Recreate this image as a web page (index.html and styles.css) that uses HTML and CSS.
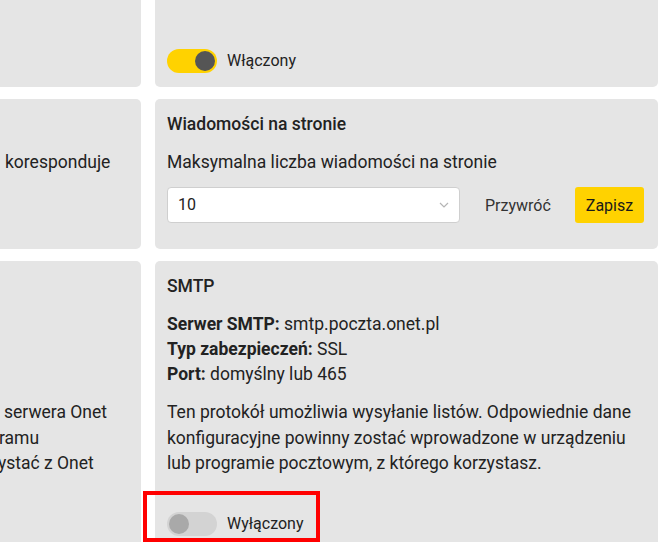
FILE: index.html
```html
<!DOCTYPE html>
<html lang="pl">
<head>
<meta charset="utf-8">
<title>Ustawienia poczty</title>
<link rel="stylesheet" href="styles.css">
</head>
<body>
<div class="settings">
  <!-- row 1 -->
  <div class="card card-left card-top"></div>
  <div class="card card-right card-top">
    <div class="toggle-row">
      <span class="toggle on"><span class="knob"></span></span>
      <span class="toggle-label">Włączony</span>
    </div>
  </div>

  <!-- row 2 -->
  <div class="card card-left">
    <div class="card-title">&nbsp;</div>
    <p class="text frag-a">koresponduje</p>
  </div>
  <div class="card card-right">
    <div class="card-title">Wiadomości na stronie</div>
    <p class="text">Maksymalna liczba wiadomości na stronie</p>
    <div class="form-row">
      <div class="select">
        <span class="select-value">10</span>
        <svg class="chevron" width="10" height="6" viewBox="0 0 10 6"><polyline points="1,1 5,5 9,1" fill="none" stroke="#b5b5b5" stroke-width="1.2"/></svg>
      </div>
      <button class="btn btn-link">Przywróć</button>
      <button class="btn btn-primary">Zapisz</button>
    </div>
  </div>

  <!-- row 3 -->
  <div class="card card-left card-last">
    <div class="card-title">&nbsp;</div>
    <div class="info"><div>&nbsp;</div><div>&nbsp;</div><div>&nbsp;</div></div>
    <div class="desc">
      <div class="frag-b">serwera Onet</div>
      <div class="frag-c">ramu</div>
      <div class="frag-d">ystać z Onet</div>
    </div>
  </div>
  <div class="card card-right card-last">
    <div class="card-title">SMTP</div>
    <div class="info">
      <div><b>Serwer SMTP:</b> smtp.poczta.onet.pl</div>
      <div><b>Typ zabezpieczeń:</b> SSL</div>
      <div><b>Port:</b> domyślny lub 465</div>
    </div>
    <div class="desc">Ten protokół umożliwia wysyłanie listów. Odpowiednie dane konfiguracyjne powinny zostać wprowadzone w urządzeniu lub programie pocztowym, z którego korzystasz.</div>
    <div class="toggle-row toggle-bottom">
      <span class="toggle off"><span class="knob"></span></span>
      <span class="toggle-label">Wyłączony</span>
      <span class="highlight"></span>
    </div>
  </div>
</div>
</body>
</html>
```
FILE: styles.css
```css
html, body {
  margin: 0;
  padding: 0;
  background: #ffffff;
  overflow: hidden;
  height: 542px;
}

body {
  font-family: Roboto, "Noto Sans", sans-serif;
  font-size: 16px;
  color: #222222;
}

.settings {
  display: grid;
  grid-template-columns: 141px 503px;
  column-gap: 14px;
  row-gap: 12px;
  padding-right: 8px;
}

.card {
  background: #e5e5e5;
  padding: 13px 12px;
  border-radius: 5px;
  font-size: 17.5px;
}

.card-left {
  padding-left: 0;
  padding-right: 0;
  border-radius: 0 5px 5px 0;
  white-space: nowrap;
  overflow: hidden;
}

.card-top {
  padding-top: 49px;
  padding-bottom: 14px;
  border-top-left-radius: 0;
  border-top-right-radius: 0;
}

.card-last {
  padding-bottom: 60px;
}

.card-title {
  line-height: 24px;
  font-weight: 500;
  margin-bottom: 14px;
}

.text {
  margin: 0 0 13px 0;
  line-height: 24px;
}

.frag-a { padding-left: 5px; }
.frag-b { padding-left: 4px; }
.frag-c { margin-left: -1px; }
.frag-d { margin-left: -2px; }

.form-row {
  display: flex;
  align-items: center;
  margin-bottom: 13px;
  font-size: 16px;
}

.select {
  box-sizing: border-box;
  width: 293px;
  height: 36px;
  background: #ffffff;
  border: 1px solid #cfcfcf;
  border-radius: 4px;
  display: flex;
  align-items: center;
  justify-content: space-between;
  padding: 0 10px 0 10px;
  margin-right: 13px;
}

.select-value {
  line-height: 24px;
}

.btn {
  font-family: inherit;
  font-size: 16px;
  height: 36px;
  border: 0;
  border-radius: 3px;
  cursor: pointer;
}

.btn-link {
  background: transparent;
  color: #333333;
  padding: 0 12px;
  margin-right: 12px;
}

.btn-primary {
  background: #ffd200;
  color: #1a1a1a;
  padding: 0 11px;
}

.info {
  line-height: 25px;
  margin-bottom: 13px;
}

.info b {
  font-weight: 700;
}

.desc {
  line-height: 25.5px;
}

.toggle-row {
  display: flex;
  align-items: center;
  height: 24px;
  position: relative;
  font-size: 16px;
}

.toggle-bottom {
  margin-top: 35px;
}

.toggle {
  box-sizing: border-box;
  width: 50px;
  height: 24px;
  border-radius: 12px;
  padding: 2px;
  display: flex;
}

.toggle .knob {
  width: 20px;
  height: 20px;
  border-radius: 50%;
}

.toggle.on {
  background: #ffd200;
  justify-content: flex-end;
}

.toggle.on .knob {
  background: #555555;
}

.toggle.off {
  background: #d3d3d3;
  justify-content: flex-start;
}

.toggle.off .knob {
  background: #a9a9a9;
}

.toggle-label {
  margin-left: 10px;
  line-height: 24px;
  color: #222222;
}

.highlight {
  position: absolute;
  left: -24px;
  top: -21px;
  width: 177px;
  height: 51px;
  box-sizing: border-box;
  border: 4px solid #ff0000;
  pointer-events: none;
}
```
